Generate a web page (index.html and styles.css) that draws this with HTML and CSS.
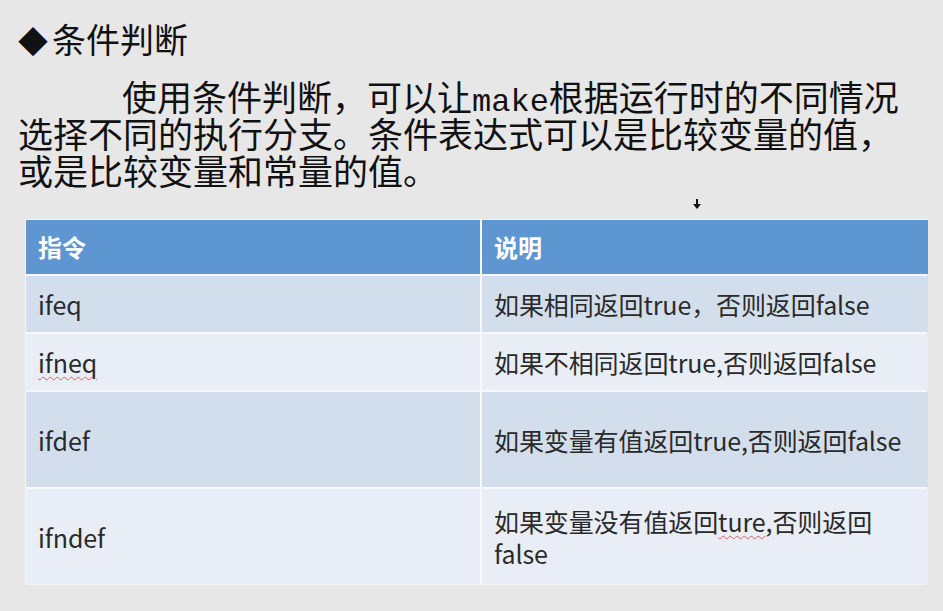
FILE: index.html
```html
<!DOCTYPE html>
<html lang="zh-CN">
<head>
<meta charset="utf-8">
<link rel="stylesheet" href="styles.css">
</head>
<body>
<div class="slide">
  <h1 class="title"><span class="bullet">◆</span>条件判断</h1>
  <div class="para">
    <div class="line first">使用条件判断，可以让<span class="mono">make</span>根据运行时的不同情况</div>
    <div class="line">选择不同的执行分支。条件表达式可以是比较变量的值，</div>
    <div class="line">或是比较变量和常量的值。</div>
  </div>
  <div class="cursor"><svg width="8" height="11" viewBox="0 0 8 11"><rect x="3" y="0" width="2" height="6" fill="#111"/><polygon points="0,5 8,5 4,10" fill="#111"/></svg></div>
  <div class="table">
    <div class="cell head"><div>指令</div></div>
    <div class="cell head"><div>说明</div></div>
    <div class="cell odd h1"><div>ifeq</div></div>
    <div class="cell odd h1"><div>如果相同返回true，否则返回false</div></div>
    <div class="cell even h1"><div><span class="spell">ifneq</span></div></div>
    <div class="cell even h1"><div>如果不相同返回true,否则返回false</div></div>
    <div class="cell odd h2"><div>ifdef</div></div>
    <div class="cell odd h2"><div>如果变量有值返回true,否则返回false</div></div>
    <div class="cell even h2"><div>ifndef</div></div>
    <div class="cell even h2"><div>如果变量没有值返回<span class="spell">ture</span>,否则返回<br>false</div></div>
  </div>
</div>
</body>
</html>
```
FILE: styles.css
```css
html, body {
  margin: 0;
  padding: 0;
  background: #e7e7e7;
}
.slide {
  position: relative;
  width: 943px;
  height: 611px;
  box-sizing: border-box;
  padding: 18px 0 0 18px;
  font-family: "Noto Sans CJK SC", "Noto Sans", sans-serif;
  color: #111;
}
.title {
  margin: 0;
  font-size: 34px;
  font-weight: 400;
  line-height: 42px;
  white-space: nowrap;
}
.bullet {
  display: inline-block;
  width: 34px;
  font-size: 30px;
}
.para {
  margin: 16px 0 0 0;
  font-size: 35px;
}
.line {
  height: 37px;
  line-height: 37px;
  white-space: nowrap;
}
.line.first {
  padding-left: 104px;
}
.mono {
  font-family: "Liberation Mono", "DejaVu Sans Mono", monospace;
  font-size: 32px;
  line-height: 0;
}
.cursor {
  position: absolute;
  left: 693px;
  top: 199px;
  line-height: 0;
}
.table {
  margin: 31px 0 0 7px;
  width: 902px;
  display: grid;
  grid-template-columns: 454px 446px;
  column-gap: 2px;
  row-gap: 2px;
  background: #f6f8fb;
  border: 1px solid #f2f5f8;
  box-sizing: border-box;
}
.cell {
  display: flex;
  align-items: center;
  padding: 0 4px 0 12px;
  font-size: 25px;
  line-height: 32px;
  color: #2a2a2a;
  letter-spacing: -0.1px;
  white-space: nowrap;
}
.head {
  background: #5e96d2;
  color: #fff;
  font-weight: 700;
  height: 54px;
  font-size: 24px;
  letter-spacing: 0;
}
.odd { background: #d3deec; }
.even { background: #e9eef6; }
.h1 { height: 56px; }
.h2 { height: 95px; }
.spell {
  text-decoration: underline wavy #e06060;
  text-decoration-thickness: 1px;
  text-underline-offset: 3px;
}
```
